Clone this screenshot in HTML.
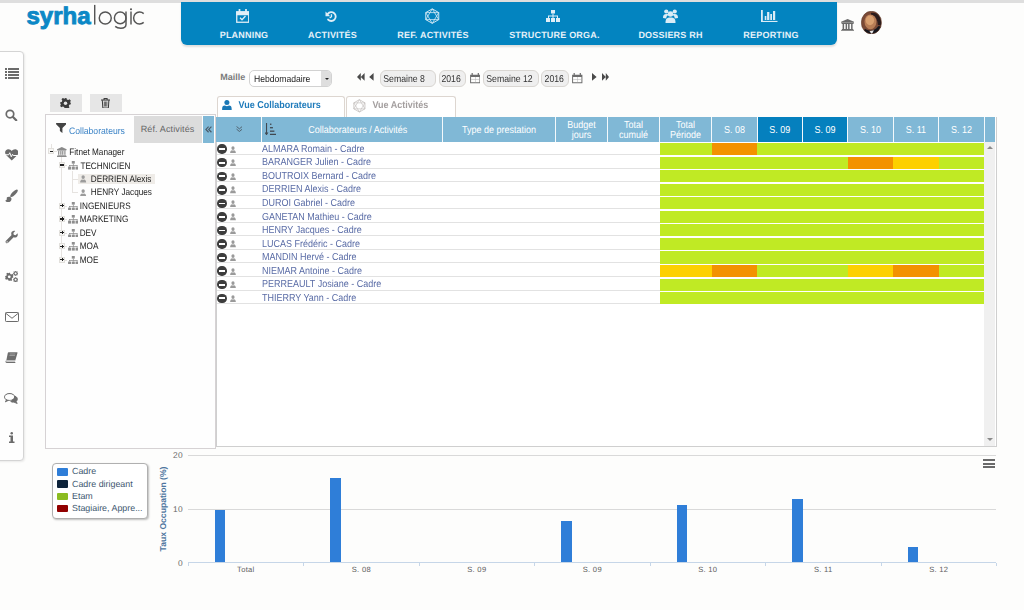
<!DOCTYPE html>
<html><head><meta charset="utf-8">
<style>
*{margin:0;padding:0;box-sizing:border-box}
html,body{width:1024px;height:610px;overflow:hidden;background:#fdfdfc;font-family:"Liberation Sans",sans-serif;position:relative;text-rendering:geometricPrecision}
.a{position:absolute}
.t{position:absolute;white-space:nowrap;line-height:1}
#topstrip{left:0;top:0;width:1024px;height:2.5px;background:#dedede}
#nav{left:181px;top:2px;width:656px;height:43px;background:#0384c0;border-radius:0 0 6px 6px;box-shadow:0 2px 2px rgba(0,0,0,0.12)}
.nt{font-size:9px;font-weight:bold;color:#e6f1f8;top:30.6px;transform:translateX(-50%);letter-spacing:0.2px}
#side{left:-5px;top:51px;width:29px;height:410px;border:1px solid #d4d4d4;border-radius:0 4px 4px 0;background:#fefefe;box-shadow:1px 1px 2px rgba(0,0,0,0.08)}
.hd{background:#80b8d6}
.hdk{background:#0580be}
.ht{color:#fff;font-size:9px;transform:translateX(-50%) scaleY(1.12);text-align:center;line-height:10px}
.rowline{height:1px;background:#e2e2e2}
.nm{font-size:9px;color:#5a6ca6;transform:scaleY(1.12);transform-origin:0 100%}
.gb{background:#c0ea24}
.tr{font-size:8.2px;color:#232323;transform:scaleY(1.14);transform-origin:0 50%}
</style></head><body>
<div id="topstrip" class="a"></div>

<!-- logo -->
<svg class="a" style="left:0;top:0" width="160" height="34" viewBox="0 0 160 34">
<text x="26.4" y="23.8" font-family="Liberation Sans" font-weight="bold" font-size="24" fill="#0c88c6" stroke="#0c88c6" stroke-width="0.9" textLength="64.2" lengthAdjust="spacingAndGlyphs">syrha</text>
<g fill="none" stroke="#555" stroke-width="1.45">
<path d="M94.7 4.9V24.6"/>
<circle cx="105.25" cy="18" r="6"/>
<circle cx="120.2" cy="17.9" r="5.8"/>
<path d="M126 11.5V24.5Q126 28.2 120.8 28.2Q117.2 28.2 115.2 26.4"/>
<path d="M131 11.6V24.6"/>
<path d="M143.7 13.6A6 6 0 1 0 143.7 22.4"/>
</g>
<circle cx="131" cy="9.3" r="1.05" fill="#555"/>
</svg>

<!-- nav -->
<div id="nav" class="a"></div>
<div class="t nt" style="left:244px">PLANNING</div>
<div class="t nt" style="left:332.5px">ACTIVITÉS</div>
<div class="t nt" style="left:433px">REF. ACTIVITÉS</div>
<div class="t nt" style="left:554.4px">STRUCTURE ORGA.</div>
<div class="t nt" style="left:670.5px">DOSSIERS RH</div>
<div class="t nt" style="left:771px">REPORTING</div>

<!-- sidebar -->
<div id="side" class="a"></div>

<!-- nav icons -->
<svg class="a" style="left:235.5px;top:9px" width="13.5" height="14" viewBox="0 0 27 28" fill="none" stroke="#e0eef7" stroke-width="2.6">
<rect x="1.5" y="6" width="24" height="20.5" fill="none"/><path d="M1.5 6h24v5h-24z" fill="#e0eef7"/><path d="M7 1v6M20 1v6" stroke-width="3.5" stroke-linecap="round"/><path d="M8 17.5l4 4 7-7.5" stroke-width="2.6"/></svg>
<svg class="a" style="left:325px;top:9.8px" width="12.4" height="12.4" viewBox="0 0 24 24" fill="none" stroke="#e0eef7">
<path d="M5.5 7.5A8.5 8.5 0 1 1 6 18.5" stroke-width="3.6" stroke-linecap="round"/><path d="M1 3l0 9h9z" fill="#e0eef7" stroke="none"/><path d="M12.5 8v5l-3.5 2.5" stroke-width="2.6"/></svg>
<svg class="a" style="left:425px;top:7.8px" width="14.5" height="16.2" viewBox="0 0 29 32" fill="none" stroke="#d8ebf6" stroke-width="1.9"><path d="M14.5 1.5L27.5 9v14L14.5 30.5 1.5 23V9z"/><path d="M14.5 1.5L27.5 23H1.5zM14.5 30.5L1.5 9h26z" stroke-width="1.6"/></svg>
<svg class="a" style="left:546px;top:10px" width="14" height="12" viewBox="0 0 28 24" fill="#e0eef7">
<rect x="10" y="0" width="8" height="7"/><rect x="0" y="16" width="8" height="8"/><rect x="10" y="16" width="8" height="8"/><rect x="20" y="16" width="8" height="8"/><path d="M13 7h2v4h9v5h-2v-3H15v3h-2v-3H6v3H4v-5h9z"/></svg>
<svg class="a" style="left:662.5px;top:9px" width="15" height="14" viewBox="0 0 30 28" fill="#dbecf6">
<circle cx="6.5" cy="5" r="4.2"/><circle cx="23.5" cy="5" r="4.2"/><circle cx="15" cy="10" r="5.5"/><path d="M0 18c0-6 2-8 6.5-8s4 1 4 2c-3 2-4 4-4 7z"/><path d="M30 18c0-6-2-8-6.5-8s-4 1-4 2c3 2 4 4 4 7z"/><path d="M5 28c0-8 2-11 10-11s10 3 10 11z"/></svg>
<svg class="a" style="left:761px;top:9.9px" width="16.5" height="12" viewBox="0 0 33 24" fill="#dbecf6">
<rect x="0" y="0" width="3.6" height="24"/><rect x="0" y="21.8" width="33" height="2.2"/><rect x="7.5" y="12" width="3.2" height="8"/><rect x="12.2" y="4" width="4.5" height="16"/><rect x="18.5" y="8" width="3.5" height="12"/><rect x="24" y="2" width="4.4" height="18"/></svg>
<!-- building + avatar -->
<svg class="a" style="left:841px;top:18.8px" width="13.2" height="12.5" viewBox="0 0 26 25" fill="#6a6a6a">
<path d="M13 0L26 5.5v2H0v-2z"/><rect x="1" y="8" width="24" height="2"/><rect x="3" y="10" width="3" height="10"/><rect x="9" y="10" width="3" height="10"/><rect x="14" y="10" width="3" height="10"/><rect x="20" y="10" width="3" height="10"/><rect x="1.5" y="20" width="23" height="2"/><rect x="0" y="22.5" width="26" height="2.5"/></svg>
<svg class="a" style="left:861.3px;top:10.7px" width="20.8" height="23.2" viewBox="0 0 42 47">
<defs><clipPath id="av"><ellipse cx="21" cy="23.5" rx="20.5" ry="23"/></clipPath><filter id="bl"><feGaussianBlur stdDeviation="1.2"/></filter></defs>
<g clip-path="url(#av)"><rect width="42" height="47" fill="#7b4a36"/>
<g filter="url(#bl)">
<path d="M20 4C30 2 38 8 40 18L42 30 34 28C34 18 30 10 20 8z" fill="#2a1a1c"/>
<ellipse cx="19" cy="22" rx="12" ry="15" fill="#b97e57"/><ellipse cx="18" cy="19" rx="8.5" ry="10" fill="#d9a070"/>
<path d="M2 47L8 36C14 40 22 42 30 36L36 30 44 34V47z" fill="#15151f"/><path d="M17 41l5 6 4-8z" fill="#e6e6e6"/></g></g>
<ellipse cx="21" cy="23.5" rx="20.5" ry="23" fill="none" stroke="#5a3526" stroke-width="1.2"/></svg>

<!-- sidebar icons -->
<svg class="a" style="left:4.7px;top:67.6px" width="14" height="11" viewBox="0 0 28 22" fill="#6b6b6b">
<rect x="0" y="0" width="4" height="4"/><rect x="6" y="0" width="22" height="4"/><rect x="0" y="6" width="4" height="4"/><rect x="6" y="6" width="22" height="4"/><rect x="0" y="12" width="4" height="4"/><rect x="6" y="12" width="22" height="4"/><rect x="0" y="18" width="4" height="4"/><rect x="6" y="18" width="22" height="4"/></svg>
<svg class="a" style="left:5.3px;top:108.5px" width="12.5" height="12.6" viewBox="0 0 25 25" fill="none" stroke="#6b6b6b">
<circle cx="10" cy="10" r="7.5" stroke-width="3.4"/><path d="M15.5 15.5L22.5 22.5" stroke-width="4.4" stroke-linecap="round"/></svg>
<svg class="a" style="left:4.5px;top:149px" width="13.5" height="11.5" viewBox="0 0 27 23" fill="#6b6b6b">
<path d="M13.5 23L2.5 12.5C-1 9 -0.5 2.5 4.5 0.8 8.5-0.5 11.5 1.5 13.5 4 15.5 1.5 18.5-0.5 22.5 0.8 27.5 2.5 28 9 24.5 12.5z"/>
<path d="M0 11.5h7.5l2-4 3 8 2.5-5 1.5 2.5H27" fill="none" stroke="#fefefe" stroke-width="2"/></svg>
<svg class="a" style="left:5px;top:188.7px" width="13" height="13.5" viewBox="0 0 26 27" fill="#6d6d6d"><ellipse cx="18" cy="8.5" rx="10" ry="3.6" transform="rotate(-45 18 8.5)"/><path d="M4 16.5C7 14.5 11 15 12.5 18 14 21.5 11.5 26.5 6.5 26.5 3.5 26.5 1.5 25 0.5 23 3 23 3.5 21.5 3.5 19.5 3.5 18 3.5 17 4 16.5z"/></svg>
<svg class="a" style="left:5px;top:230px" width="13" height="13.7" viewBox="0 0 26 27" fill="#6d6d6d"><path d="M25 6.5l-3.8 3.6-3.6-1-.9-3.4L20.5 2C16.8 0.6 13 2.5 12.5 6.2 12.3 7.6 12.6 9 13.2 10L2 21.2C0.6 22.6 0.8 24.6 2 25.6 3.2 26.8 5 26.8 6.3 25.5L17.3 14.5C18.5 15 19.8 15.2 21 14.9 24.8 14 26.5 10.2 25 6.5z"/><circle cx="4.2" cy="23.6" r="1.3" fill="#fefefe"/></svg>
<svg class="a" style="left:5px;top:271px" width="13" height="11.2" viewBox="0 0 26 22" fill="#6d6d6d">
<g transform="translate(8.5,11.5)"><path d="M-1.5-8h3l.6 2.3 2.1.9 2.1-1.2 2.1 2.1-1.2 2.1.9 2.1L8-1.5v3l-2.3.6-.9 2.1 1.2 2.1-2.1 2.1-2.1-1.2-2.1.9L1.5 8h-3l-.6-2.3-2.1-.9-2.1 1.2-2.1-2.1 1.2-2.1-.9-2.1L-8 1.5v-3l2.3-.6.9-2.1-1.2-2.1 2.1-2.1 2.1 1.2 2.1-.9z"/><circle r="2.8" fill="#fefefe"/></g>
<g transform="translate(21.2,4.6)"><circle r="3.3" fill="none" stroke="#6d6d6d" stroke-width="2.2"/><g stroke="#6d6d6d" stroke-width="1.6"><path d="M0-5V5M-5 0H5M-3.5-3.5L3.5 3.5M-3.5 3.5L3.5-3.5"/></g><circle r="1.7" fill="#fefefe"/></g>
<g transform="translate(21.2,17.2)"><circle r="3.3" fill="none" stroke="#6d6d6d" stroke-width="2.2"/><g stroke="#6d6d6d" stroke-width="1.6"><path d="M0-5V5M-5 0H5M-3.5-3.5L3.5 3.5M-3.5 3.5L3.5-3.5"/></g><circle r="1.7" fill="#fefefe"/></g></svg>
<svg class="a" style="left:4.5px;top:312.3px" width="14" height="10" viewBox="0 0 28 20" fill="none" stroke="#6b6b6b" stroke-width="2">
<rect x="1" y="1" width="26" height="18" rx="1.5"/><path d="M1.5 2.5L14 12.5 26.5 2.5"/></svg>
<svg class="a" style="left:5px;top:352px" width="12.6" height="11" viewBox="0 0 25 22" fill="#6d6d6d"><path d="M7 0.5h16.5C25 0.5 25 1.5 24.7 2.5L20.5 17H2.5L5.5 2C5.8 1 6.2 0.5 7 0.5z"/><path d="M9.5 4h11M8.8 7h11" stroke="#b5b5b5" stroke-width="1.3"/><path d="M2.5 17h18l-0.8 3H3.5C2 20 1.8 18.5 2.5 17z" fill="#c9c9c9"/><path d="M1.2 17.5C0.5 20.5 1.5 21.8 3.5 21.8h16.8l0.5-1.8H3.8C2.5 20 2.2 19 2.6 17.5z"/></svg>
<svg class="a" style="left:4.4px;top:393px" width="14.2" height="10.8" viewBox="0 0 28 21" fill="none" stroke="#6d6d6d" stroke-width="2.2"><ellipse cx="11" cy="7.6" rx="9.8" ry="6.5"/><path d="M5 13L2.5 17.5 9.5 14" fill="#6d6d6d" stroke-width="1.5"/><path d="M21.5 6C25.5 7.5 27 10.5 26 13.5 25.5 15 24.5 16 24 16.5L26 20.5 19.5 17.8C17 18.2 14.5 17.5 13 16.5" fill="#6d6d6d" stroke-width="1.8"/><ellipse cx="11" cy="7.6" rx="8.7" ry="5.4" fill="#fefefe" stroke="none"/></svg>
<svg class="a" style="left:9px;top:432.3px" width="5.5" height="11.2" viewBox="0 0 11 22" fill="#6b6b6b">
<circle cx="5.5" cy="2.5" r="2.5"/><path d="M0 7h8v12h3v3H0v-3h3v-9H0z"/></svg>




<!-- left panel -->
<div class="a" style="left:49.7px;top:94.2px;width:32.5px;height:17.5px;background:#e6e6e6"></div>
<div class="a" style="left:90px;top:94.2px;width:32px;height:17.5px;background:#e6e6e6"></div>
<div class="a" style="left:45px;top:114px;width:171px;height:335px;border:1px solid #d6d2d4;background:#fefefe"></div>
<div class="a" style="left:134px;top:116px;width:68px;height:26.5px;background:#dcdcdc"></div>
<div class="a" style="left:203px;top:116px;width:11px;height:26.5px;background:#80b8d6"></div>
<div class="t" style="left:69px;top:126.5px;font-size:8.6px;color:#3b83c6;transform:scaleY(1.1);transform-origin:0 100%">Collaborateurs</div>
<div class="t" style="left:140.7px;top:125px;font-size:9px;color:#666;letter-spacing:0.12px">Réf. Activités</div>

<!-- toolbar icons -->
<svg class="a" style="left:60px;top:97.8px" width="11" height="10.6" viewBox="0 0 22 22" fill="#3c3c3c">
<g transform="translate(11,11)"><path d="M-2-11h4l.8 3.1 2.8 1.2 2.8-1.6 2.8 2.8-1.6 2.8 1.2 2.8L11-2v4l-3.1.8-1.2 2.8 1.6 2.8-2.8 2.8-2.8-1.6-2.8 1.2L2 11h-4l-.8-3.1-2.8-1.2-2.8 1.6-2.8-2.8 1.6-2.8-1.2-2.8L-11 2v-4l3.1-.8 1.2-2.8-1.6-2.8 2.8-2.8 2.8 1.6 2.8-1.2z"/><circle r="3.6" fill="#e8e8e8"/></g></svg>
<svg class="a" style="left:101px;top:97.8px" width="9.2" height="10.6" viewBox="0 0 18 21" fill="none" stroke="#3c3c3c" stroke-width="2">
<path d="M0 4h18" stroke-width="2.2"/><path d="M6 4V1.2h6V4"/><path d="M2.5 4.5l1 15.5h11l1-15.5"/><path d="M6.5 7v10M9 7v10M11.5 7v10" stroke-width="1.6"/></svg>
<div class="a" style="left:61.3px;top:157px;width:1px;height:103px;background:#e6e3e0"></div>
<div class="a" style="left:50.8px;top:144px;width:1px;height:4px;background:#e6e3e0"></div>
<div class="a" style="left:72.2px;top:170.5px;width:1px;height:21.5px;background:#e6e3e0"></div>
<div class="a" style="left:72.2px;top:178.5px;width:6px;height:1px;background:#e6e3e0"></div>
<div class="a" style="left:72.2px;top:191.8px;width:6px;height:1px;background:#e6e3e0"></div>
<div class="a" style="left:64px;top:165px;width:3px;height:1px;background:#e6e3e0"></div>
<div class="a" style="left:64px;top:205.5px;width:3px;height:1px;background:#e6e3e0"></div>
<div class="a" style="left:64px;top:219px;width:3px;height:1px;background:#e6e3e0"></div>
<div class="a" style="left:64px;top:232.6px;width:3px;height:1px;background:#e6e3e0"></div>
<div class="a" style="left:64px;top:246.2px;width:3px;height:1px;background:#e6e3e0"></div>
<div class="a" style="left:64px;top:259.6px;width:3px;height:1px;background:#e6e3e0"></div>
<div class="a" style="left:53.5px;top:151px;width:3px;height:1px;background:#e6e3e0"></div>
<div class="a" style="left:48.2px;top:148.20px;width:6px;height:6px;border:1px solid #e2e0dc;background:#f7f6f4"></div><div class="a" style="left:49.5px;top:150.60px;width:3.6px;height:1.3px;background:#222"></div>
<svg class="a" style="left:57.4px;top:146.6px" width="9.6" height="10" viewBox="0 0 26 27" fill="#8a8a8a"><path d="M13 0L26 6v2H0V6z"/><rect x="1" y="9" width="24" height="2"/><rect x="3" y="11" width="3.2" height="10"/><rect x="8.8" y="11" width="3.2" height="10"/><rect x="14" y="11" width="3.2" height="10"/><rect x="19.8" y="11" width="3.2" height="10"/><rect x="1.5" y="21.5" width="23" height="2"/><rect x="0" y="24" width="26" height="3"/></svg>
<div class="t tr" style="left:69.3px;top:148.6px">Fitnet Manager</div>
<div class="a" style="left:59.1px;top:161.90px;width:6px;height:6px;border:1px solid #e2e0dc;background:#f7f6f4"></div><div class="a" style="left:60.4px;top:164.30px;width:3.6px;height:1.3px;background:#222"></div>
<svg class="a" style="left:67.7px;top:161.30px" width="10.6" height="8.6" viewBox="0 0 28 23" fill="#8e8e8e"><rect x="10" y="0" width="8" height="7"/><rect x="0" y="15" width="8" height="8"/><rect x="10" y="15" width="8" height="8"/><rect x="20" y="15" width="8" height="8"/><path d="M13 7h2v3.5h10.5v4.5h-2v-2.5H15v2.5h-2v-2.5H4.5v2.5h-2v-4.5H13z"/></svg>
<div class="t tr" style="left:80.4px;top:162.6px">TECHNICIEN</div>
<div class="a" style="left:78.2px;top:173.6px;width:76.5px;height:10.6px;background:#efece8"></div>
<svg class="a" style="left:80.4px;top:175.20px" width="6.3" height="7.5" viewBox="0 0 12 14"><ellipse cx="6" cy="3.9" rx="3.2" ry="3.8" fill="#9c9c9c"/><path d="M0.3 14 C0.3 10.8 1.5 9 4.2 8.4 C5.3 9 6.7 9 7.8 8.4 C10.5 9 11.7 10.8 11.7 14Z" fill="#9c9c9c"/></svg>
<div class="t tr" style="left:90.8px;top:175.5px">DERRIEN Alexis</div>
<svg class="a" style="left:80.4px;top:188.70px" width="6.3" height="7.5" viewBox="0 0 12 14"><ellipse cx="6" cy="3.9" rx="3.2" ry="3.8" fill="#9c9c9c"/><path d="M0.3 14 C0.3 10.8 1.5 9 4.2 8.4 C5.3 9 6.7 9 7.8 8.4 C10.5 9 11.7 10.8 11.7 14Z" fill="#9c9c9c"/></svg>
<div class="t tr" style="left:90.8px;top:189px">HENRY Jacques</div>
<div class="a" style="left:59.1px;top:202.50px;width:6px;height:6px;border:1px solid #e2e0dc;background:#f7f6f4"></div><div class="a" style="left:60.4px;top:204.90px;width:3.6px;height:1.3px;background:#222"></div><div class="a" style="left:61.5px;top:203.80px;width:1.3px;height:3.6px;background:#222"></div>
<svg class="a" style="left:67.7px;top:201.70px" width="10.6" height="8.6" viewBox="0 0 28 23" fill="#8e8e8e"><rect x="10" y="0" width="8" height="7"/><rect x="0" y="15" width="8" height="8"/><rect x="10" y="15" width="8" height="8"/><rect x="20" y="15" width="8" height="8"/><path d="M13 7h2v3.5h10.5v4.5h-2v-2.5H15v2.5h-2v-2.5H4.5v2.5h-2v-4.5H13z"/></svg>
<div class="t tr" style="left:79.7px;top:202.5px">INGENIEURS</div>
<div class="a" style="left:59.1px;top:216.00px;width:6px;height:6px;border:1px solid #e2e0dc;background:#f7f6f4"></div><div class="a" style="left:60.4px;top:218.40px;width:3.6px;height:1.3px;background:#222"></div><div class="a" style="left:61.5px;top:217.30px;width:1.3px;height:3.6px;background:#222"></div>
<svg class="a" style="left:67.7px;top:215.20px" width="10.6" height="8.6" viewBox="0 0 28 23" fill="#8e8e8e"><rect x="10" y="0" width="8" height="7"/><rect x="0" y="15" width="8" height="8"/><rect x="10" y="15" width="8" height="8"/><rect x="20" y="15" width="8" height="8"/><path d="M13 7h2v3.5h10.5v4.5h-2v-2.5H15v2.5h-2v-2.5H4.5v2.5h-2v-4.5H13z"/></svg>
<div class="t tr" style="left:79.7px;top:216px">MARKETING</div>
<div class="a" style="left:59.1px;top:229.60px;width:6px;height:6px;border:1px solid #e2e0dc;background:#f7f6f4"></div><div class="a" style="left:60.4px;top:232.00px;width:3.6px;height:1.3px;background:#222"></div><div class="a" style="left:61.5px;top:230.90px;width:1.3px;height:3.6px;background:#222"></div>
<svg class="a" style="left:67.7px;top:228.80px" width="10.6" height="8.6" viewBox="0 0 28 23" fill="#8e8e8e"><rect x="10" y="0" width="8" height="7"/><rect x="0" y="15" width="8" height="8"/><rect x="10" y="15" width="8" height="8"/><rect x="20" y="15" width="8" height="8"/><path d="M13 7h2v3.5h10.5v4.5h-2v-2.5H15v2.5h-2v-2.5H4.5v2.5h-2v-4.5H13z"/></svg>
<div class="t tr" style="left:79.7px;top:229.6px">DEV</div>
<div class="a" style="left:59.1px;top:243.20px;width:6px;height:6px;border:1px solid #e2e0dc;background:#f7f6f4"></div><div class="a" style="left:60.4px;top:245.60px;width:3.6px;height:1.3px;background:#222"></div><div class="a" style="left:61.5px;top:244.50px;width:1.3px;height:3.6px;background:#222"></div>
<svg class="a" style="left:67.7px;top:242.40px" width="10.6" height="8.6" viewBox="0 0 28 23" fill="#8e8e8e"><rect x="10" y="0" width="8" height="7"/><rect x="0" y="15" width="8" height="8"/><rect x="10" y="15" width="8" height="8"/><rect x="20" y="15" width="8" height="8"/><path d="M13 7h2v3.5h10.5v4.5h-2v-2.5H15v2.5h-2v-2.5H4.5v2.5h-2v-4.5H13z"/></svg>
<div class="t tr" style="left:79.7px;top:243.2px">MOA</div>
<div class="a" style="left:59.1px;top:256.60px;width:6px;height:6px;border:1px solid #e2e0dc;background:#f7f6f4"></div><div class="a" style="left:60.4px;top:259.00px;width:3.6px;height:1.3px;background:#222"></div><div class="a" style="left:61.5px;top:257.90px;width:1.3px;height:3.6px;background:#222"></div>
<svg class="a" style="left:67.7px;top:255.80px" width="10.6" height="8.6" viewBox="0 0 28 23" fill="#8e8e8e"><rect x="10" y="0" width="8" height="7"/><rect x="0" y="15" width="8" height="8"/><rect x="10" y="15" width="8" height="8"/><rect x="20" y="15" width="8" height="8"/><path d="M13 7h2v3.5h10.5v4.5h-2v-2.5H15v2.5h-2v-2.5H4.5v2.5h-2v-4.5H13z"/></svg>
<div class="t tr" style="left:79.7px;top:256.6px">MOE</div>
<svg class="a" style="left:55.7px;top:122.9px" width="10.3" height="10.1" viewBox="0 0 20 20" fill="#444"><path d="M0 0h20v2.5L12.5 10v10L7.5 16V10L0 2.5z"/></svg>
<svg class="a" style="left:205px;top:126px" width="7.2" height="6.8" viewBox="0 0 14 13" fill="none" stroke="#4a5a68" stroke-width="2.3"><path d="M7 1L1.8 6.5 7 12M12.5 1L7.3 6.5 12.5 12"/></svg>
<!-- tabs -->
<div class="a" style="left:216.5px;top:96px;width:128.5px;height:22px;border:1px solid #ddd6d0;border-bottom:none;border-radius:3px 3px 0 0;background:#fff"></div>
<div class="a" style="left:346px;top:96px;width:109.5px;height:21px;border:1px solid #ddd6d0;border-bottom:none;border-radius:3px 3px 0 0;background:#fff"></div>
<div class="t" style="left:238.6px;top:101px;font-size:9px;font-weight:bold;color:#1f7bbb;transform:scaleY(1.1);transform-origin:0 100%">Vue Collaborateurs</div>
<div class="t" style="left:372.4px;top:101px;font-size:9px;font-weight:bold;color:#a39e9e;transform:scaleY(1.1);transform-origin:0 100%">Vue Activités</div>

<!-- toolbar -->
<div class="t" style="left:220.3px;top:72.7px;font-size:9px;font-weight:bold;color:#7a7a7a">Maille</div>
<div class="a" style="left:249.3px;top:70.2px;width:82.4px;height:16.6px;border:1px solid #d2d2d2;border-radius:5px;background:#fff;overflow:hidden"><div class="a" style="right:0;top:0;width:9.4px;height:100%;background:#dedede"></div></div>
<div class="a" style="left:324.8px;top:78px;width:0;height:0;border-left:2.6px solid transparent;border-right:2.6px solid transparent;border-top:2.6px solid #222"></div>
<div class="t" style="left:254px;top:75.2px;font-size:8.6px;color:#222;transform:scaleY(1.1);transform-origin:0 100%">Hebdomadaire</div>
<svg class="a" style="left:357.4px;top:72.8px" width="16.8" height="7.8" viewBox="0 0 168 78" fill="#4a4a4a"><path d="M38 0V78L0 39zM76 0V78L38 39zM166 0V78L122 39z"/></svg>
<div class="a" style="left:380.1px;top:69.9px;width:56.2px;height:17px;border:1px solid #d9d6d2;border-radius:6px;background:#efefef"></div>
<div class="a" style="left:438.7px;top:69.9px;width:27px;height:17px;border:1px solid #d9d6d2;border-radius:6px;background:#efefef"></div>
<div class="a" style="left:483.2px;top:69.9px;width:55.6px;height:17px;border:1px solid #d9d6d2;border-radius:6px;background:#efefef"></div>
<div class="a" style="left:541.3px;top:69.9px;width:27.6px;height:17px;border:1px solid #d9d6d2;border-radius:6px;background:#efefef"></div>
<div class="t" style="left:383.3px;top:75px;font-size:8.7px;color:#333;transform:scaleY(1.14);transform-origin:0 100%">Semaine 8</div>
<div class="t" style="left:441.4px;top:75px;font-size:8.7px;color:#333;transform:scaleY(1.14);transform-origin:0 100%">2016</div>
<div class="t" style="left:486.3px;top:75px;font-size:8.7px;color:#333;transform:scaleY(1.14);transform-origin:0 100%">Semaine 12</div>
<div class="t" style="left:544.6px;top:75px;font-size:8.7px;color:#333;transform:scaleY(1.14);transform-origin:0 100%">2016</div>
<svg class="a" style="left:469.7px;top:73.3px" width="10.5" height="10.3" viewBox="0 0 21 21" fill="#6d6d6d"><rect x="3" y="0" width="2.5" height="4"/><rect x="15.5" y="0" width="2.5" height="4"/><path d="M0 3.5h21V21H0z M2 8v11h17V8z" fill-rule="evenodd"/><path d="M2 13h17v1H2zM10 8h1v11h-1z" fill="#b0b0b0"/></svg>
<svg class="a" style="left:572.2px;top:73.3px" width="10.5" height="10.3" viewBox="0 0 21 21" fill="#6d6d6d"><rect x="3" y="0" width="2.5" height="4"/><rect x="15.5" y="0" width="2.5" height="4"/><path d="M0 3.5h21V21H0z M2 8v11h17V8z" fill-rule="evenodd"/><path d="M2 13h17v1H2zM10 8h1v11h-1z" fill="#b0b0b0"/></svg>
<svg class="a" style="left:592px;top:72.8px" width="17" height="7.8" viewBox="0 0 170 78" fill="#4a4a4a"><path d="M0 0V78L46 39zM100 0V78L138 39zM138 0V78L170 39z"/></svg>
<!-- tab icons -->
<svg class="a" style="left:222.1px;top:99.9px" width="9.8" height="10.6" viewBox="0 0 20 22" fill="#1a78b6"><circle cx="10" cy="5.2" r="5.2"/><path d="M0 19.5C0 13.5 2 11.5 5.5 11.5L10 13l4.5-1.5C18 11.5 20 13.5 20 19.5 20 21 19 22 17.5 22h-15C1 22 0 21 0 19.5z"/></svg>
<svg class="a" style="left:353px;top:98.9px" width="12.8" height="13.7" viewBox="0 0 29 32" fill="none" stroke="#c2bebb" stroke-width="1.8"><path d="M14.5 1.5L27.5 9v14L14.5 30.5 1.5 23V9z"/><path d="M14.5 1.5L27.5 23H1.5zM14.5 30.5L1.5 9h26z" stroke-width="1.5"/></svg>

<!-- grid -->
<div class="a" style="left:215.5px;top:116.5px;width:781px;height:330px;border:1px solid #cfcfcf;border-top:none;background:#fff"></div>
<div class="a hd" style="left:216px;top:116.6px;width:779.4px;height:25.099999999999994px"></div>
<div class="a hdk" style="left:757.1px;top:116.6px;width:90.69999999999993px;height:25.099999999999994px"></div>
<div class="a" style="left:260.9px;top:116.6px;width:1px;height:25.099999999999994px;background:#f4f9fc"></div>
<div class="a" style="left:442.0px;top:116.6px;width:1px;height:25.099999999999994px;background:#f4f9fc"></div>
<div class="a" style="left:555.0px;top:116.6px;width:1px;height:25.099999999999994px;background:#f4f9fc"></div>
<div class="a" style="left:607.1px;top:116.6px;width:1px;height:25.099999999999994px;background:#f4f9fc"></div>
<div class="a" style="left:659.0px;top:116.6px;width:1px;height:25.099999999999994px;background:#f4f9fc"></div>
<div class="a" style="left:711.2px;top:116.6px;width:1px;height:25.099999999999994px;background:#f4f9fc"></div>
<div class="a" style="left:756.6px;top:116.6px;width:1px;height:25.099999999999994px;background:#f4f9fc"></div>
<div class="a" style="left:801.9px;top:116.6px;width:1px;height:25.099999999999994px;background:#f4f9fc"></div>
<div class="a" style="left:847.3px;top:116.6px;width:1px;height:25.099999999999994px;background:#f4f9fc"></div>
<div class="a" style="left:892.7px;top:116.6px;width:1px;height:25.099999999999994px;background:#f4f9fc"></div>
<div class="a" style="left:938.1px;top:116.6px;width:1px;height:25.099999999999994px;background:#f4f9fc"></div>
<div class="a" style="left:983.7px;top:116.6px;width:1px;height:25.099999999999994px;background:#f4f9fc"></div>
<svg class="a" style="left:235.5px;top:126px" width="6.8" height="6.2" viewBox="0 0 14 13" fill="none" stroke="#4a5560" stroke-width="1.8"><path d="M1 1l6 5 6-5M1 6.5l6 5 6-5"/></svg>
<svg class="a" style="left:264.6px;top:122.6px" width="11.4" height="12.6" viewBox="0 0 23 25" fill="#404850"><path d="M2 0h2.2v19H7l-4 6-4-6h3z"/><rect x="10" y="1" width="3" height="2.6"/><rect x="10" y="8" width="6" height="2.6"/><rect x="10" y="15" width="9" height="2.6"/><rect x="10" y="21.5" width="13" height="3"/></svg>
<div class="t ht" style="left:357.8px;top:124.9px">Collaborateurs / Activités</div>
<div class="t ht" style="left:499px;top:124.9px">Type de prestation</div>
<div class="t ht" style="left:581.5px;top:119.7px">Budget</div>
<div class="t ht" style="left:581.5px;top:129.8px">jours</div>
<div class="t ht" style="left:633.5px;top:119.7px">Total</div>
<div class="t ht" style="left:633.5px;top:129.8px">cumulé</div>
<div class="t ht" style="left:685.5px;top:119.7px">Total</div>
<div class="t ht" style="left:685.5px;top:129.8px">Période</div>
<div class="t ht" style="left:734.4000000000001px;top:124.9px">S. 08</div>
<div class="t ht" style="left:779.75px;top:124.9px">S. 09</div>
<div class="t ht" style="left:825.0999999999999px;top:124.9px">S. 09</div>
<div class="t ht" style="left:870.5px;top:124.9px">S. 10</div>
<div class="t ht" style="left:915.9000000000001px;top:124.9px">S. 11</div>
<div class="t ht" style="left:961.4000000000001px;top:124.9px">S. 12</div>
<div class="a rowline" style="left:216.5px;top:154.05px;width:443.0px"></div>
<div class="a gb" style="left:659.9px;top:143.00px;width:324.3px;height:12.2px"></div>
<div class="a" style="left:711.7px;top:143.00px;width:45.4px;height:12.2px;background:#f39200"></div>
<div class="a" style="left:217.4px;top:144.47px;width:9.4px;height:9.4px;border-radius:50%;background:#3d3d3d"></div>
<div class="a" style="left:219.2px;top:148.37px;width:5.8px;height:1.8px;background:#fff"></div>
<svg class="a" style="left:229.5px;top:145.57px" width="6" height="7.3" viewBox="0 0 12 14"><ellipse cx="6" cy="3.9" rx="3.2" ry="3.8" fill="#9a9a9a"/><path d="M0.3 14 C0.3 10.8 1.5 9 4.2 8.4 C5.3 9 6.7 9 7.8 8.4 C10.5 9 11.7 10.8 11.7 14Z" fill="#9a9a9a"/></svg>
<div class="t nm" style="left:262px;top:144.77px">ALMARA Romain - Cadre</div>
<div class="a rowline" style="left:216.5px;top:167.60px;width:443.0px"></div>
<div class="a gb" style="left:659.9px;top:156.55px;width:324.3px;height:12.2px"></div>
<div class="a" style="left:847.8px;top:156.55px;width:45.4px;height:12.2px;background:#f39200"></div>
<div class="a" style="left:893.2px;top:156.55px;width:45.4px;height:12.2px;background:#fdd000"></div>
<div class="a" style="left:217.4px;top:158.03px;width:9.4px;height:9.4px;border-radius:50%;background:#3d3d3d"></div>
<div class="a" style="left:219.2px;top:161.92px;width:5.8px;height:1.8px;background:#fff"></div>
<svg class="a" style="left:229.5px;top:159.12px" width="6" height="7.3" viewBox="0 0 12 14"><ellipse cx="6" cy="3.9" rx="3.2" ry="3.8" fill="#9a9a9a"/><path d="M0.3 14 C0.3 10.8 1.5 9 4.2 8.4 C5.3 9 6.7 9 7.8 8.4 C10.5 9 11.7 10.8 11.7 14Z" fill="#9a9a9a"/></svg>
<div class="t nm" style="left:262px;top:158.32px">BARANGER Julien - Cadre</div>
<div class="a rowline" style="left:216.5px;top:181.15px;width:443.0px"></div>
<div class="a gb" style="left:659.9px;top:170.10px;width:324.3px;height:12.2px"></div>
<div class="a" style="left:217.4px;top:171.57px;width:9.4px;height:9.4px;border-radius:50%;background:#3d3d3d"></div>
<div class="a" style="left:219.2px;top:175.47px;width:5.8px;height:1.8px;background:#fff"></div>
<svg class="a" style="left:229.5px;top:172.67px" width="6" height="7.3" viewBox="0 0 12 14"><ellipse cx="6" cy="3.9" rx="3.2" ry="3.8" fill="#9a9a9a"/><path d="M0.3 14 C0.3 10.8 1.5 9 4.2 8.4 C5.3 9 6.7 9 7.8 8.4 C10.5 9 11.7 10.8 11.7 14Z" fill="#9a9a9a"/></svg>
<div class="t nm" style="left:262px;top:171.87px">BOUTROIX Bernard - Cadre</div>
<div class="a rowline" style="left:216.5px;top:194.70px;width:443.0px"></div>
<div class="a gb" style="left:659.9px;top:183.65px;width:324.3px;height:12.2px"></div>
<div class="a" style="left:217.4px;top:185.12px;width:9.4px;height:9.4px;border-radius:50%;background:#3d3d3d"></div>
<div class="a" style="left:219.2px;top:189.02px;width:5.8px;height:1.8px;background:#fff"></div>
<svg class="a" style="left:229.5px;top:186.22px" width="6" height="7.3" viewBox="0 0 12 14"><ellipse cx="6" cy="3.9" rx="3.2" ry="3.8" fill="#9a9a9a"/><path d="M0.3 14 C0.3 10.8 1.5 9 4.2 8.4 C5.3 9 6.7 9 7.8 8.4 C10.5 9 11.7 10.8 11.7 14Z" fill="#9a9a9a"/></svg>
<div class="t nm" style="left:262px;top:185.42px">DERRIEN Alexis - Cadre</div>
<div class="a rowline" style="left:216.5px;top:208.25px;width:443.0px"></div>
<div class="a gb" style="left:659.9px;top:197.20px;width:324.3px;height:12.2px"></div>
<div class="a" style="left:217.4px;top:198.67px;width:9.4px;height:9.4px;border-radius:50%;background:#3d3d3d"></div>
<div class="a" style="left:219.2px;top:202.57px;width:5.8px;height:1.8px;background:#fff"></div>
<svg class="a" style="left:229.5px;top:199.77px" width="6" height="7.3" viewBox="0 0 12 14"><ellipse cx="6" cy="3.9" rx="3.2" ry="3.8" fill="#9a9a9a"/><path d="M0.3 14 C0.3 10.8 1.5 9 4.2 8.4 C5.3 9 6.7 9 7.8 8.4 C10.5 9 11.7 10.8 11.7 14Z" fill="#9a9a9a"/></svg>
<div class="t nm" style="left:262px;top:198.97px">DUROI Gabriel - Cadre</div>
<div class="a rowline" style="left:216.5px;top:221.80px;width:443.0px"></div>
<div class="a gb" style="left:659.9px;top:210.75px;width:324.3px;height:12.2px"></div>
<div class="a" style="left:217.4px;top:212.22px;width:9.4px;height:9.4px;border-radius:50%;background:#3d3d3d"></div>
<div class="a" style="left:219.2px;top:216.12px;width:5.8px;height:1.8px;background:#fff"></div>
<svg class="a" style="left:229.5px;top:213.32px" width="6" height="7.3" viewBox="0 0 12 14"><ellipse cx="6" cy="3.9" rx="3.2" ry="3.8" fill="#9a9a9a"/><path d="M0.3 14 C0.3 10.8 1.5 9 4.2 8.4 C5.3 9 6.7 9 7.8 8.4 C10.5 9 11.7 10.8 11.7 14Z" fill="#9a9a9a"/></svg>
<div class="t nm" style="left:262px;top:212.52px">GANETAN Mathieu - Cadre</div>
<div class="a rowline" style="left:216.5px;top:235.35px;width:443.0px"></div>
<div class="a gb" style="left:659.9px;top:224.30px;width:324.3px;height:12.2px"></div>
<div class="a" style="left:217.4px;top:225.78px;width:9.4px;height:9.4px;border-radius:50%;background:#3d3d3d"></div>
<div class="a" style="left:219.2px;top:229.67px;width:5.8px;height:1.8px;background:#fff"></div>
<svg class="a" style="left:229.5px;top:226.88px" width="6" height="7.3" viewBox="0 0 12 14"><ellipse cx="6" cy="3.9" rx="3.2" ry="3.8" fill="#9a9a9a"/><path d="M0.3 14 C0.3 10.8 1.5 9 4.2 8.4 C5.3 9 6.7 9 7.8 8.4 C10.5 9 11.7 10.8 11.7 14Z" fill="#9a9a9a"/></svg>
<div class="t nm" style="left:262px;top:226.07px">HENRY Jacques - Cadre</div>
<div class="a rowline" style="left:216.5px;top:248.90px;width:443.0px"></div>
<div class="a gb" style="left:659.9px;top:237.85px;width:324.3px;height:12.2px"></div>
<div class="a" style="left:217.4px;top:239.33px;width:9.4px;height:9.4px;border-radius:50%;background:#3d3d3d"></div>
<div class="a" style="left:219.2px;top:243.22px;width:5.8px;height:1.8px;background:#fff"></div>
<svg class="a" style="left:229.5px;top:240.43px" width="6" height="7.3" viewBox="0 0 12 14"><ellipse cx="6" cy="3.9" rx="3.2" ry="3.8" fill="#9a9a9a"/><path d="M0.3 14 C0.3 10.8 1.5 9 4.2 8.4 C5.3 9 6.7 9 7.8 8.4 C10.5 9 11.7 10.8 11.7 14Z" fill="#9a9a9a"/></svg>
<div class="t nm" style="left:262px;top:239.62px">LUCAS Frédéric - Cadre</div>
<div class="a rowline" style="left:216.5px;top:262.45px;width:443.0px"></div>
<div class="a gb" style="left:659.9px;top:251.40px;width:324.3px;height:12.2px"></div>
<div class="a" style="left:217.4px;top:252.88px;width:9.4px;height:9.4px;border-radius:50%;background:#3d3d3d"></div>
<div class="a" style="left:219.2px;top:256.77px;width:5.8px;height:1.8px;background:#fff"></div>
<svg class="a" style="left:229.5px;top:253.97px" width="6" height="7.3" viewBox="0 0 12 14"><ellipse cx="6" cy="3.9" rx="3.2" ry="3.8" fill="#9a9a9a"/><path d="M0.3 14 C0.3 10.8 1.5 9 4.2 8.4 C5.3 9 6.7 9 7.8 8.4 C10.5 9 11.7 10.8 11.7 14Z" fill="#9a9a9a"/></svg>
<div class="t nm" style="left:262px;top:253.17px">MANDIN Hervé - Cadre</div>
<div class="a rowline" style="left:216.5px;top:276.00px;width:443.0px"></div>
<div class="a gb" style="left:659.9px;top:264.95px;width:324.3px;height:12.2px"></div>
<div class="a" style="left:659.9px;top:264.95px;width:51.8px;height:12.2px;background:#fdd000"></div>
<div class="a" style="left:711.7px;top:264.95px;width:45.4px;height:12.2px;background:#f39200"></div>
<div class="a" style="left:847.8px;top:264.95px;width:45.4px;height:12.2px;background:#fdd000"></div>
<div class="a" style="left:893.2px;top:264.95px;width:45.4px;height:12.2px;background:#f39200"></div>
<div class="a" style="left:217.4px;top:266.42px;width:9.4px;height:9.4px;border-radius:50%;background:#3d3d3d"></div>
<div class="a" style="left:219.2px;top:270.32px;width:5.8px;height:1.8px;background:#fff"></div>
<svg class="a" style="left:229.5px;top:267.52px" width="6" height="7.3" viewBox="0 0 12 14"><ellipse cx="6" cy="3.9" rx="3.2" ry="3.8" fill="#9a9a9a"/><path d="M0.3 14 C0.3 10.8 1.5 9 4.2 8.4 C5.3 9 6.7 9 7.8 8.4 C10.5 9 11.7 10.8 11.7 14Z" fill="#9a9a9a"/></svg>
<div class="t nm" style="left:262px;top:266.72px">NIEMAR Antoine - Cadre</div>
<div class="a rowline" style="left:216.5px;top:289.55px;width:443.0px"></div>
<div class="a gb" style="left:659.9px;top:278.50px;width:324.3px;height:12.2px"></div>
<div class="a" style="left:217.4px;top:279.97px;width:9.4px;height:9.4px;border-radius:50%;background:#3d3d3d"></div>
<div class="a" style="left:219.2px;top:283.87px;width:5.8px;height:1.8px;background:#fff"></div>
<svg class="a" style="left:229.5px;top:281.07px" width="6" height="7.3" viewBox="0 0 12 14"><ellipse cx="6" cy="3.9" rx="3.2" ry="3.8" fill="#9a9a9a"/><path d="M0.3 14 C0.3 10.8 1.5 9 4.2 8.4 C5.3 9 6.7 9 7.8 8.4 C10.5 9 11.7 10.8 11.7 14Z" fill="#9a9a9a"/></svg>
<div class="t nm" style="left:262px;top:280.27px">PERREAULT Josiane - Cadre</div>
<div class="a rowline" style="left:216.5px;top:303.10px;width:443.0px"></div>
<div class="a gb" style="left:659.9px;top:292.05px;width:324.3px;height:12.2px"></div>
<div class="a" style="left:217.4px;top:293.52px;width:9.4px;height:9.4px;border-radius:50%;background:#3d3d3d"></div>
<div class="a" style="left:219.2px;top:297.42px;width:5.8px;height:1.8px;background:#fff"></div>
<svg class="a" style="left:229.5px;top:294.62px" width="6" height="7.3" viewBox="0 0 12 14"><ellipse cx="6" cy="3.9" rx="3.2" ry="3.8" fill="#9a9a9a"/><path d="M0.3 14 C0.3 10.8 1.5 9 4.2 8.4 C5.3 9 6.7 9 7.8 8.4 C10.5 9 11.7 10.8 11.7 14Z" fill="#9a9a9a"/></svg>
<div class="t nm" style="left:262px;top:293.82px">THIERRY Yann - Cadre</div>
<div class="a" style="left:984.2px;top:141.7px;width:11.2px;height:304.3px;background:#f0f0f0"></div>
<div class="a" style="left:987.2px;top:145.8px;width:0;height:0;border-left:3px solid transparent;border-right:3px solid transparent;border-bottom:3px solid #8a8a8a"></div>
<div class="a" style="left:987.2px;top:438px;width:0;height:0;border-left:3px solid transparent;border-right:3px solid transparent;border-top:3px solid #8a8a8a"></div>

<!-- chart -->
<div class="a" style="left:188.1px;top:454.8px;width:808.4px;height:1px;background:#d9d9d9"></div>
<div class="a" style="left:188.1px;top:508.9px;width:808.4px;height:1px;background:#d9d9d9"></div>
<div class="a" style="left:188.1px;top:562.3px;width:808.4px;height:1px;background:#c6d6e8"></div>
<div class="a" style="left:187.60px;top:562.8px;width:1px;height:3px;background:#c6d6e8"></div>
<div class="a" style="left:303.09px;top:562.8px;width:1px;height:3px;background:#c6d6e8"></div>
<div class="a" style="left:418.57px;top:562.8px;width:1px;height:3px;background:#c6d6e8"></div>
<div class="a" style="left:534.06px;top:562.8px;width:1px;height:3px;background:#c6d6e8"></div>
<div class="a" style="left:649.54px;top:562.8px;width:1px;height:3px;background:#c6d6e8"></div>
<div class="a" style="left:765.03px;top:562.8px;width:1px;height:3px;background:#c6d6e8"></div>
<div class="a" style="left:880.51px;top:562.8px;width:1px;height:3px;background:#c6d6e8"></div>
<div class="a" style="left:996.00px;top:562.8px;width:1px;height:3px;background:#c6d6e8"></div>
<div class="t" style="left:150px;width:33px;text-align:right;top:451.2px;font-size:8.4px;color:#666;letter-spacing:0.3px">20</div>
<div class="t" style="left:150px;width:33px;text-align:right;top:505.29999999999995px;font-size:8.4px;color:#666;letter-spacing:0.3px">10</div>
<div class="t" style="left:150px;width:33px;text-align:right;top:558.6999999999999px;font-size:8.4px;color:#666;letter-spacing:0.3px">0</div>
<div class="t" style="left:245.84px;top:565.5px;font-size:7.6px;color:#606060;transform:translateX(-50%);letter-spacing:0.3px">Total</div>
<div class="a" style="left:214.70px;top:509.6px;width:10.6px;height:52.70px;background:#2f7ed8"></div>
<div class="t" style="left:361.33px;top:565.5px;font-size:7.6px;color:#606060;transform:translateX(-50%);letter-spacing:0.3px">S. 08</div>
<div class="a" style="left:330.19px;top:478.1px;width:10.6px;height:84.20px;background:#2f7ed8"></div>
<div class="t" style="left:476.81px;top:565.5px;font-size:7.6px;color:#606060;transform:translateX(-50%);letter-spacing:0.3px">S. 09</div>
<div class="t" style="left:592.30px;top:565.5px;font-size:7.6px;color:#606060;transform:translateX(-50%);letter-spacing:0.3px">S. 09</div>
<div class="a" style="left:561.16px;top:520.9px;width:10.6px;height:41.40px;background:#2f7ed8"></div>
<div class="t" style="left:707.79px;top:565.5px;font-size:7.6px;color:#606060;transform:translateX(-50%);letter-spacing:0.3px">S. 10</div>
<div class="a" style="left:676.64px;top:504.5px;width:10.6px;height:57.80px;background:#2f7ed8"></div>
<div class="t" style="left:823.27px;top:565.5px;font-size:7.6px;color:#606060;transform:translateX(-50%);letter-spacing:0.3px">S. 11</div>
<div class="a" style="left:792.13px;top:499.0px;width:10.6px;height:63.30px;background:#2f7ed8"></div>
<div class="t" style="left:938.76px;top:565.5px;font-size:7.6px;color:#606060;transform:translateX(-50%);letter-spacing:0.3px">S. 12</div>
<div class="a" style="left:907.61px;top:547.0px;width:10.6px;height:15.30px;background:#2f7ed8"></div>
<div class="t" style="left:162.9px;top:509px;font-size:8.6px;font-weight:bold;color:#4d759e;transform:translate(-50%,-50%) rotate(-90deg)">Taux Occupation (%)</div>
<div class="a" style="left:983px;top:459.20px;width:11.6px;height:2px;background:#6a6a6a"></div>
<div class="a" style="left:983px;top:462.50px;width:11.6px;height:2px;background:#6a6a6a"></div>
<div class="a" style="left:983px;top:465.80px;width:11.6px;height:2px;background:#6a6a6a"></div>
<div class="a" style="left:52.3px;top:462.5px;width:95.3px;height:56px;border:1px solid #b0b0b0;border-radius:4px;background:#fff;box-shadow:1px 1px 2px rgba(0,0,0,0.25)"></div>
<div class="a" style="left:57.3px;top:468.10px;width:10.8px;height:7.8px;background:#2f7ed8;border-radius:1px"></div>
<div class="t" style="left:72px;top:467.40px;font-size:8.9px;color:#3e576f">Cadre</div>
<div class="a" style="left:57.3px;top:480.30px;width:10.8px;height:7.8px;background:#0d233a;border-radius:1px"></div>
<div class="t" style="left:72px;top:479.60px;font-size:8.9px;color:#3e576f">Cadre dirigeant</div>
<div class="a" style="left:57.3px;top:492.50px;width:10.8px;height:7.8px;background:#8bbc21;border-radius:1px"></div>
<div class="t" style="left:72px;top:491.80px;font-size:8.9px;color:#3e576f">Etam</div>
<div class="a" style="left:57.3px;top:504.70px;width:10.8px;height:7.8px;background:#910000;border-radius:1px"></div>
<div class="t" style="left:72px;top:504.00px;font-size:8.9px;color:#3e576f">Stagiaire, Appre...</div>
</body></html>
